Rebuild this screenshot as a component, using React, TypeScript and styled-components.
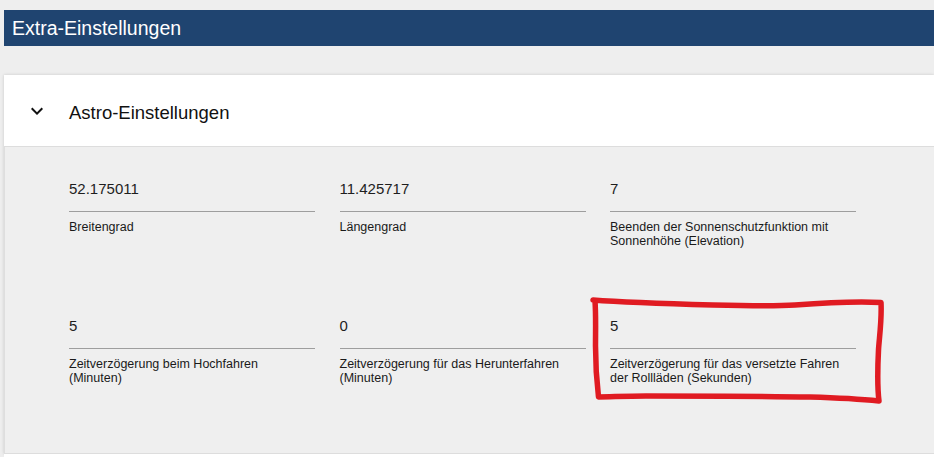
import React from "react";
import styled, { createGlobalStyle } from "styled-components";

const GlobalStyle = createGlobalStyle`
  html, body {
    margin: 0;
    padding: 0;
    background: #eeeeee;
    font-family: "Liberation Sans", Arial, sans-serif;
  }
`;

const Page = styled.div`
  position: relative;
  width: 934px;
  height: 457px;
  overflow: hidden;
  padding: 10px 0 0 4px;
  box-sizing: border-box;
  background: #eeeeee;
`;

const TitleBar = styled.div`
  height: 36px;
  background: #1f4470;
  color: #ffffff;
  font-size: 19.5px;
  line-height: 36px;
  padding-left: 8px;
  white-space: nowrap;
`;

const Card = styled.section`
  margin-top: 29px;
  background: #ffffff;
  box-shadow: 0 0 3px rgba(0, 0, 0, 0.16);
`;

const CardHeader = styled.div`
  height: 71px;
  display: flex;
  align-items: center;
  border-bottom: 1px solid #dddddd;
  background: #ffffff;
`;

const ChevronBox = styled.div`
  width: 24px;
  height: 24px;
  margin-left: 21px;
  margin-right: 20px;
  display: flex;
`;

const CardTitle = styled.div`
  font-size: 18.5px;
  color: #111111;
  margin-top: 4px;
`;

const CardBody = styled.div`
  background: #efefef;
  border-left: 1px solid #dedede;
  border-bottom: 1px solid #dddddd;
  padding: 32px 0 68px 64px;
  display: grid;
  grid-template-columns: repeat(3, 246px);
  column-gap: 24.5px;
  row-gap: 68px;
`;

const Field = styled.div`
  display: flex;
  flex-direction: column;
`;

const Value = styled.div`
  font-size: 15px;
  line-height: 20px;
  color: #1e1e1e;
  padding-bottom: 12px;
  border-bottom: 1px solid #9e9e9e;
`;

const Label = styled.div`
  margin-top: 8px;
  font-size: 12.5px;
  line-height: 14px;
  color: #1a1a1a;
  min-height: 28px;
  max-width: 240px;
`;

const NextCard = styled.div`
  height: 20px;
  background: #ffffff;
`;

const Annotation = styled.svg`
  position: absolute;
  left: 0;
  top: 0;
  pointer-events: none;
`;

const fields = [
  { value: "52.175011", label: "Breitengrad" },
  { value: "11.425717", label: "Längengrad" },
  { value: "7", label: "Beenden der Sonnenschutzfunktion mit Sonnenhöhe (Elevation)" },
  { value: "5", label: "Zeitverzögerung beim Hochfahren (Minuten)" },
  { value: "0", label: "Zeitverzögerung für das Herunterfahren (Minuten)" },
  { value: "5", label: "Zeitverzögerung für das versetzte Fahren der Rollläden (Sekunden)" },
];

export default function App() {
  return (
    <>
      <GlobalStyle />
      <Page>
        <TitleBar>Extra-Einstellungen</TitleBar>
        <Card>
          <CardHeader>
            <ChevronBox>
              <svg width="24" height="24" viewBox="0 0 24 24">
                <path d="M16.59 8.59L12 13.17 7.41 8.59 6 10l6 6 6-6z" fill="#111" />
              </svg>
            </ChevronBox>
            <CardTitle>Astro-Einstellungen</CardTitle>
          </CardHeader>
          <CardBody>
            {fields.map((f, i) => (
              <Field key={i}>
                <Value>{f.value}</Value>
                <Label>{f.label}</Label>
              </Field>
            ))}
          </CardBody>
        </Card>
        <NextCard />
        <Annotation width="934" height="457" viewBox="0 0 934 457">
          <path
            d="M593 300 C 620 302, 660 303.5, 713 305 C 750 306, 775 306.5, 795 305 C 815 303.5, 850 301, 881 302.5 C 882 320, 879 340, 878.5 350 C 877.5 370, 877 385, 879 401 C 860 399, 845 398, 810 397 C 760 396, 700 396, 646 396 C 625 396, 610 397, 598.5 397 C 596.5 380, 595.5 360, 595.5 346 C 595.5 330, 596 315, 595 301"
            fill="none"
            stroke="#e01b22"
            strokeWidth="5.5"
            strokeLinecap="round"
            strokeLinejoin="round"
          />
        </Annotation>
      </Page>
    </>
  );
}
